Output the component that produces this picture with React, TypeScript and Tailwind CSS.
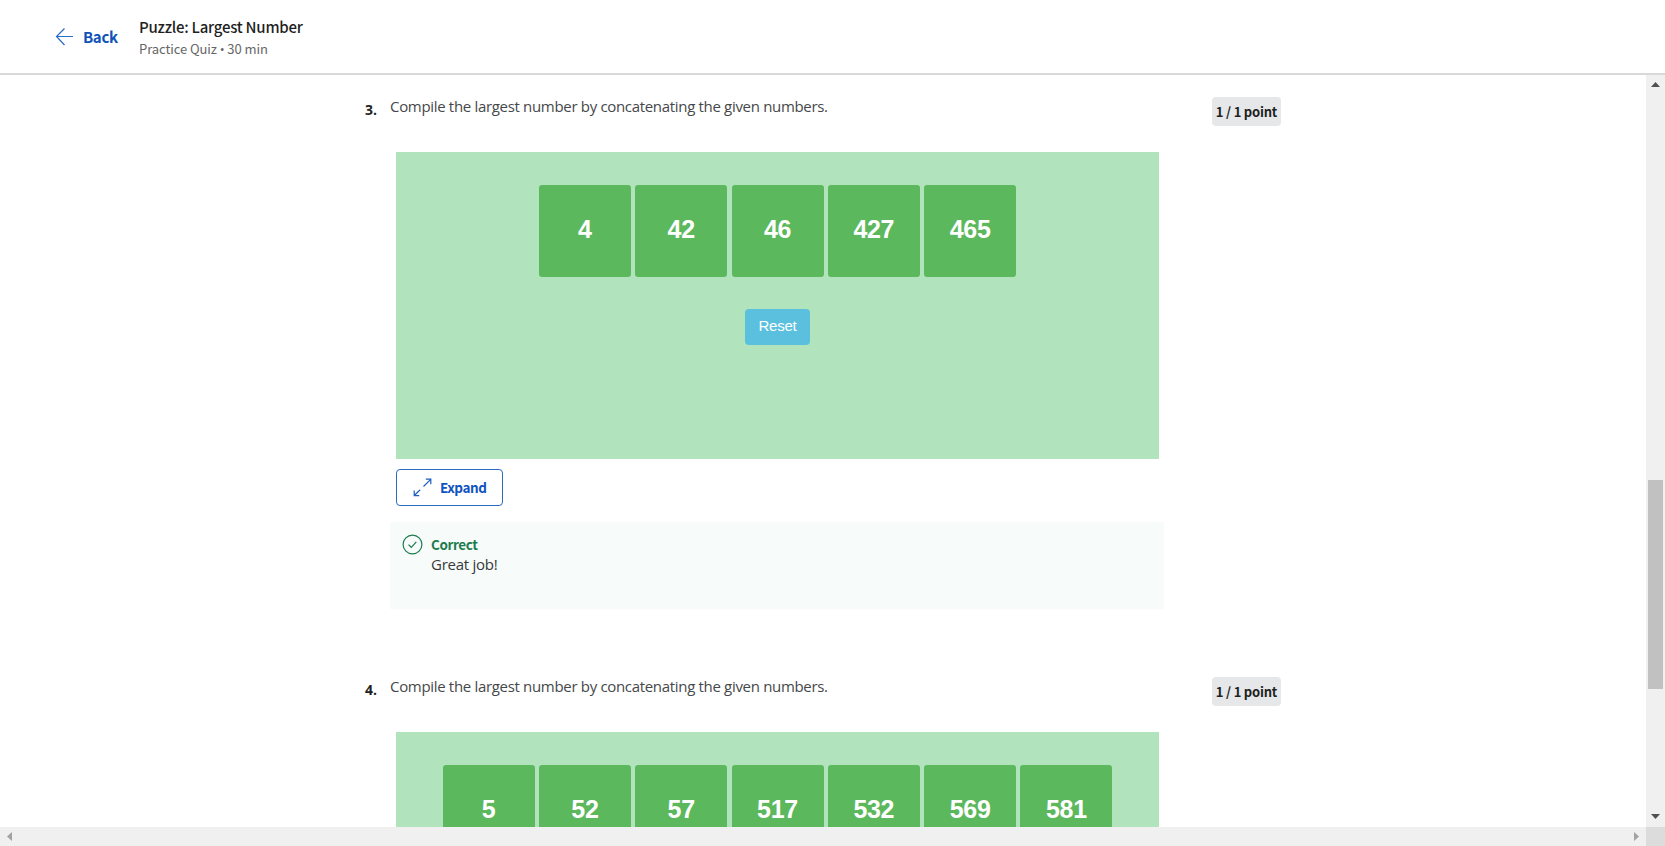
import type { ReactNode } from "react";

const source = "font-['Noto_Sans_CJK_SC','Noto_Sans',sans-serif]";
const open = "font-['Open_Sans',sans-serif]";

function Board({ numbers, children }: { numbers: number[]; children?: ReactNode }) {
  return (
    <div className="flex h-[307px] w-[763px] flex-col items-center bg-[#b1e4bd] pt-[33px] font-['Liberation_Sans',Arial,sans-serif]">
      <div className="flex gap-[4.3px]">
        {numbers.map((n) => (
          <div
            key={n}
            className="flex size-[92px] items-center justify-center rounded-[3px] bg-[#5cb85c] pb-[2px] text-[25px] font-bold tracking-[-0.3px] text-white"
          >
            {n}
          </div>
        ))}
      </div>
      {children}
    </div>
  );
}

function Question({ index, numbers }: { index: number; numbers: number[] }) {
  return (
    <section className="flex h-[580px] shrink-0 items-start pl-[365px]">
      <div className={`w-[25px] pt-[25px] text-[14px] leading-5 font-bold text-[#1f1f1f] ${open}`}>{index}.</div>
      <div className="w-[774px]">
        <p className={`pt-[19px] text-[15px] leading-6 tracking-[-0.32px] text-[#45484a] ${open}`}>
          Compile the largest number by concatenating the given numbers.
        </p>
        <div className="pt-[34px] pl-[6px]">
          <Board numbers={numbers}>
            <button className="mt-[32px] flex h-9 w-[65px] items-center justify-center rounded-[4px] bg-[#5bc0de] pb-[2px] text-[15px] tracking-[-0.25px] text-white">
              Reset
            </button>
          </Board>
          <button className={`mt-[10px] flex h-[37px] w-[107px] items-center rounded-[4px] border border-[#2a6bc0] pl-4 text-[13.5px] font-bold tracking-[-0.45px] text-[#0f53c0] ${source}`}>
            <svg width="19" height="19" viewBox="0 0 19 19" fill="none" stroke="#1f5fc0" strokeWidth="1.2">
              <path d="m10.500 8.500 7.200-7.200M12.800 1.200h5v5M7.200 11.800 1.200 17.500M1.200 12.600v5h5" />
            </svg>
            <span className="ml-2 pb-[2px] leading-5">Expand</span>
          </button>
        </div>
        <div className="mt-[16px] flex h-[87px] bg-[#f7fbf9] pt-[12px] pl-3">
          <svg width="21" height="21" viewBox="0 0 21 21" fill="none" stroke="#1d7c50" strokeWidth="1.2">
            <circle cx="10.5" cy="10.5" r="9.4" />
            <path d="m6.500 10.600 2.800 2.700 5-5.500" />
          </svg>
          <div className="ml-[8px]">
            <div className={`text-[13.5px] leading-5 font-bold tracking-[-0.4px] text-[#1d7c50] ${source}`}>Correct</div>
            <div className={`text-[15px] leading-5 tracking-[-0.25px] text-[#373a3c] ${open}`}>Great job!</div>
          </div>
        </div>
      </div>
      <div className={`mt-[22px] ml-[48px] flex h-[29px] w-[69px] items-center justify-center rounded-[4px] bg-[#e5e7e8] text-[13px] font-bold tracking-[-0.2px] whitespace-nowrap text-[#1f1f1f] ${source}`}>
        1 / 1 point
      </div>
    </section>
  );
}

export default function App() {
  return (
    <div className="flex h-[846px] w-[1665px] flex-col overflow-hidden bg-white">
      <header className={`flex h-[75px] shrink-0 items-start border-b-2 border-[#d9d9d9] pl-[55px] ${source}`}>
        <svg className="mt-[27px]" width="19" height="20" viewBox="0 0 19 20" fill="none" stroke="#2a6bc4" strokeWidth="1.2">
          <path d="M18 9.500H1.5M9.5 1.5l-8 8 8 8.500" />
        </svg>
        <div className="mt-[27px] ml-[9px] w-[56px] text-[15px] leading-5 font-bold tracking-[-0.35px] text-[#0f53b8]">Back</div>
        <div className="pt-[16px]">
          <h1 className="text-[15px] leading-[22px] font-medium tracking-[-0.25px] text-[#1f1f1f]">Puzzle: Largest Number</h1>
          <p className="mt-px text-[13px] leading-5 tracking-[-0.08px] text-[#666]">
            Practice Quiz <span className="font-['Open_Sans',sans-serif]">•</span> 30 min
          </p>
        </div>
      </header>
      <div className="flex min-h-0 flex-1">
        <main className="flex flex-1 flex-col overflow-hidden">
          <Question index={3} numbers={[4, 42, 46, 427, 465]} />
          <Question index={4} numbers={[5, 52, 57, 517, 532, 569, 581]} />
        </main>
        <div className="flex w-[19px] flex-col items-center bg-[#f0f0f0]">
          <svg className="mt-[7px]" width="9" height="6" viewBox="0 0 9 6" fill="#505050">
            <path d="M0 5 4.500 0 9 5z" />
          </svg>
          <div className="mt-[392px] h-[209px] w-[15px] bg-[#c1c1c1]" />
          <svg className="mt-auto mb-[8px]" width="9" height="5" viewBox="0 0 9 5" fill="#505050">
            <path d="M0 0h9L4.500 5z" />
          </svg>
        </div>
      </div>
      <div className="flex h-[19px] shrink-0 items-center bg-[#f0f0f0] pl-[7px]">
        <svg width="5" height="9" viewBox="0 0 5 9" fill="#a3a3a3">
          <path d="M5 0v9L0 4.500z" />
        </svg>
        <svg className="mr-[7px] ml-auto" width="5" height="9" viewBox="0 0 5 9" fill="#a3a3a3">
          <path d="M0 0v9l5-4.500z" />
        </svg>
        <div className="h-full w-[19px] bg-[#dcdcdc]" />
      </div>
    </div>
  );
}
